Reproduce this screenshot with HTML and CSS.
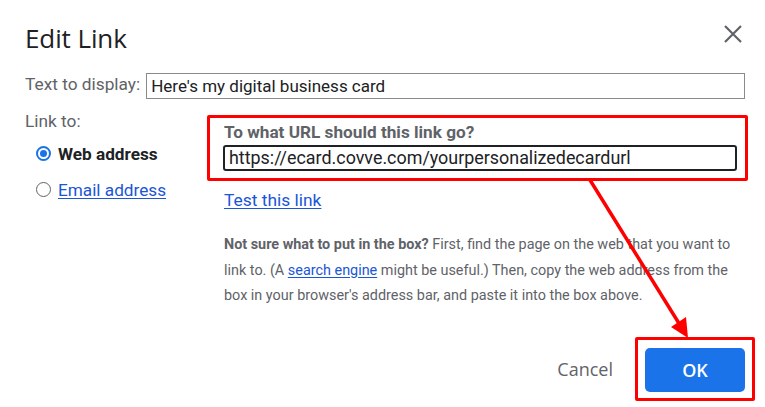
FILE: index.html
```html
<!DOCTYPE html>
<html>
<head>
<meta charset="utf-8">
<link rel="stylesheet" href="styles.css">
</head>
<body>
<div class="dialog">
  <header class="head">
    <h1 class="title">Edit Link</h1>
    <button class="close" aria-label="Close">
      <svg width="20" height="20" viewBox="0 0 20 20"><path d="M2 2 L18 18 M18 2 L2 18" stroke="#5f6368" stroke-width="2.2" fill="none"/></svg>
    </button>
  </header>

  <div class="display-row">
    <span class="label">Text to display:</span>
    <div class="field">Here's my digital business card</div>
  </div>

  <div class="link-section">
    <div class="left">
      <div class="label linkto">Link to:</div>
      <div class="radio-row">
        <span class="radio checked"></span>
        <span class="radio-label strong">Web address</span>
      </div>
      <div class="radio-row">
        <span class="radio"></span>
        <a class="radio-label link">Email address</a>
      </div>
    </div>
    <div class="right">
      <div class="urlbox">
        <div class="question">To what URL should this link go?</div>
        <div class="urlfield">https://ecard.covve.com/yourpersonalizedecardurl</div>
      </div>
      <a class="test link">Test this link</a>
      <p class="help"><b>Not sure what to put in the box?</b> First, find the page on the web that you want to link to. (A <a class="link">search engine</a> might be useful.) Then, copy the web address from the box in your browser's address bar, and paste it into the box above.</p>
    </div>
  </div>

  <div class="actions">
    <span class="cancel">Cancel</span>
    <div class="okwrap"><button class="ok">OK</button></div>
  </div>

  <svg class="arrow" width="765" height="407" viewBox="0 0 765 407">
    <line x1="590" y1="180" x2="680" y2="325" stroke="#ff0000" stroke-width="3.5"/>
    <polygon points="688,338 671,327 686,317" fill="#ff0000"/>
  </svg>
</div>
</body>
</html>
```

FILE: styles.css
```css
* { box-sizing: border-box; }
html, body { margin: 0; padding: 0; background: #fff; }
body {
  font-family: Roboto, "Liberation Sans", Arial, sans-serif;
  color: #202124;
  width: 765px;
  height: 407px;
  overflow: hidden;
}
.dialog {
  position: relative;
  width: 765px;
  height: 407px;
  padding: 0 17px 0 25px;
}
.head {
  display: flex;
  justify-content: space-between;
  align-items: flex-start;
  padding-top: 23px;
  height: 53px;
}
.title {
  margin: 0;
  font-family: "Open Sans", Roboto, sans-serif;
  font-weight: 400;
  font-size: 26px;
  line-height: 30px;
  color: #202124;
  letter-spacing: -0.1px;
}
.close {
  border: 0;
  background: none;
  padding: 0;
  margin: 1px 5px 0 0;
  width: 20px;
  height: 20px;
  display: block;
}
.close svg { display: block; }
.display-row {
  display: flex;
  align-items: center;
  margin-top: 20px;
  gap: 6px;
}
.label {
  font-size: 17.3px;
  color: #5f6368;
  line-height: 20px;
}
.display-row .label { margin-top: -4px; }
.field {
  width: 599px;
  height: 26px;
  border: 1px solid #8a8a8a;
  font-size: 17px;
  line-height: 24px;
  padding: 0 4px;
  color: #202124;
}
.link-section {
  display: flex;
  margin-top: 16px;
}
.left {
  width: 182px;
}
.linkto { line-height: 20px; margin-top: -4px; }
.radio-row {
  display: flex;
  align-items: center;
  height: 36px;
  padding-left: 11px;
}
.left .radio-row:nth-child(2) { margin-top: 5px; }
.radio {
  width: 15px;
  height: 15px;
  border-radius: 50%;
  border: 1.5px solid #5f6368;
  margin-right: 7px;
  position: relative;
  flex: none;
  top: -1px;
}
.radio.checked {
  border: 2px solid #1a73e8;
}
.radio.checked::after {
  content: "";
  position: absolute;
  left: 2px; top: 2px;
  width: 7px; height: 7px;
  border-radius: 50%;
  background: #1a73e8;
}
.radio-label { font-size: 17.2px; line-height: 20px; }
.strong { font-weight: 700; color: #202124; }
.link { color: #1a56d6; text-decoration: underline; text-underline-offset: 2px; }
.right {
  width: 541px;
}
.urlbox {
  border: 3px solid #ff0000;
  border-radius: 2px;
  padding: 5px 9px 9px 13px;
  height: 66px;
}
.question {
  font-weight: 700;
  font-size: 17.2px;
  line-height: 18px;
  color: #5f6368;
  padding-left: 1px;
}
.urlfield {
  margin-top: 4px;
  width: 514px;
  height: 26px;
  border: 2px solid #202124;
  border-radius: 3px;
  font-size: 17.9px;
  line-height: 22px;
  padding: 0 4px;
  color: #202124;
}
.test {
  display: block;
  margin: 9px 0 0 17px;
  font-size: 17.4px;
  line-height: 20px;
}
.help {
  margin: 22px 0 0 17px;
  width: 522px;
  font-size: 14.4px;
  line-height: 25.5px;
  color: #5f6368;
}
.help b { color: #5f6368; }
.actions {
  position: absolute;
  left: 0;
  top: 337px;
  right: 0;
  display: flex;
  justify-content: flex-end;
  align-items: center;
  padding-right: 10px;
}
.cancel {
  font-family: "Open Sans", Roboto, sans-serif;
  font-size: 18px;
  font-weight: 500;
  color: #5f6368;
  margin-right: 22px;
}
.okwrap {
  border: 3px solid #ff0000;
  border-radius: 2px;
  padding: 8px 7px 6px 7px;
}
.ok {
  display: block;
  width: 100px;
  height: 44px;
  background: #1a73e8;
  border: 0;
  border-radius: 5px;
  color: #fff;
  font-family: "Open Sans", Roboto, sans-serif;
  font-weight: 600;
  font-size: 18px;
}
.arrow {
  position: absolute;
  left: 0;
  top: 0;
  pointer-events: none;
}
```
